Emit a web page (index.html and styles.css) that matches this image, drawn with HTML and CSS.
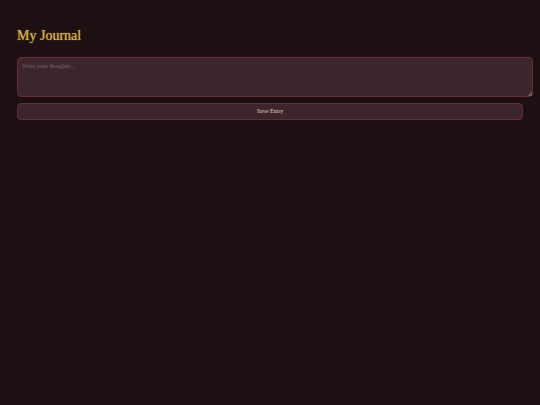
FILE: index.html
```html
<!DOCTYPE html>
<html lang="en">
<head>
    <meta charset="UTF-8">
    <meta name="viewport" content="width=device-width, initial-scale=1.0">
    <title>My Journal</title>
    <link rel="stylesheet" href="styles.css">
</head>
<body>
    <h1>My Journal</h1>
    <textarea class="entry" id="entry" aria-label="Journal entry" placeholder="Write your thoughts..."></textarea>
    <button class="save" type="button">Save Entry</button>
</body>
</html>
```

FILE: styles.css
```css
body {
    margin: 0;
    padding: 27px 17px;
    background: #1c1013;
    color: #e8d5b5;
    font-family: "Liberation Serif", serif;
}
h1 {
    margin: 0 0 12px;
    font-size: 14px;
    font-weight: normal;
    line-height: 18px;
    color: #d4af37;
    text-shadow: 0 0 1px #d4af37;
}
.entry,
.save {
    display: block;
    width: 100%;
    background: #3c252c;
    border: 1px solid #6b2d35;
    border-radius: 4px;
    font-family: inherit;
    font-size: 6px;
    line-height: 9px;
}
.entry {
    height: 30px;
    margin: 0 0 6px;
    padding: 4px;
    color: #e8d5b5;
    resize: vertical;
}
.entry::placeholder {
    color: #79686d;
}
/* small grip in the corner */
.entry::-webkit-resizer {
    background: linear-gradient(135deg, transparent 50%, #6d5a5f 50%) right bottom / 4px 4px no-repeat;
}
.save {
    padding: 3px;
    color: #e8d5b5;
    cursor: pointer;
}
.save:hover {
    background: #6b2d35;
}
```
